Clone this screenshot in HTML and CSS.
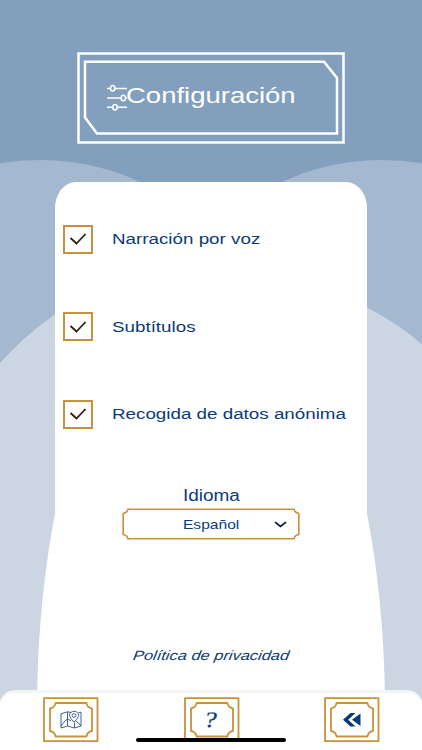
FILE: index.html
```html
<!DOCTYPE html>
<html lang="es">
<head>
    <meta charset="UTF-8">
    <meta name="viewport" content="width=device-width, initial-scale=1.0">
    <link rel="stylesheet" href="styles.css">
    <title>Configuración</title>
</head>
<body>

<!-- Fondo -->
<svg class="background" viewBox="0 0 422 750" preserveAspectRatio="none">
    <rect width="422" height="750" fill="#829fbe"/>
    <circle cx="40" cy="399" r="239" fill="#a4b8cf"/>
    <circle cx="382" cy="399" r="239" fill="#a4b8cf"/>
    <path d="M0 363 Q25 335 55 314.500 Q211 225 367 307.500 Q399 324 422 344.500 V750 H0 Z" fill="#ccd6e3"/>
    <ellipse cx="211" cy="710" rx="174" ry="443" fill="#fff"/>
</svg>

<div class="screen">
    <header class="title-box">
        <svg class="title-frame" viewBox="0 0 268 92" fill="none" stroke="#fff">
            <rect x="1.500" y="1.500" width="265" height="89" stroke-width="2.500"/>
            <path d="M8 9.700 H247 L260 26 V81.500 H20 L8 65.500 Z" stroke-width="2.500"/>
        </svg>
        <svg class="title-icon" viewBox="0 0 21 28" fill="none" stroke="#fff" stroke-width="1.500">
            <path d="M0 4.500 H3.500 M8 4.500 H20 M0 14 H14 M18.500 14 H20 M0 23.300 H5.500 M10.500 23.300 H20"/>
            <ellipse cx="5.700" cy="4.300" rx="2.200" ry="2.800"/>
            <ellipse cx="16.300" cy="14" rx="2.200" ry="2.800"/>
            <ellipse cx="8" cy="23.300" rx="2.200" ry="2.800"/>
        </svg>
        <h1>Configuración</h1>
    </header>

    <main class="card">
        <div class="option">
            <span class="checkbox"><svg viewBox="0 0 18 14"><path d="M1.500 6 L7.500 11.500 L16.500 2"/></svg></span>
            <span class="label">Narración por voz</span>
        </div>
        <div class="option">
            <span class="checkbox"><svg viewBox="0 0 18 14"><path d="M1.500 6 L7.500 11.500 L16.500 2"/></svg></span>
            <span class="label">Subtítulos</span>
        </div>
        <div class="option">
            <span class="checkbox"><svg viewBox="0 0 18 14"><path d="M1.500 6 L7.500 11.500 L16.500 2"/></svg></span>
            <span class="label">Recogida de datos anónima</span>
        </div>

        <div class="language">
            <span class="language-title">Idioma</span>
            <div class="select">
                <svg class="select-frame" viewBox="0 0 178 32" fill="none" stroke="#c8913b" stroke-width="1.600">
                    <path d="M6 1.200 H172 Q172.500 4.500 176.800 5.500 V26.500 Q172.500 27.500 172 30.800 H6 Q5.500 27.500 1.200 26.500 V5.500 Q5.500 4.500 6 1.200 Z"/>
                </svg>
                <span class="select-value">Español</span>
                <svg class="select-arrow" viewBox="0 0 13 7"><path d="M1 1.200 L6.500 5.500 L12 1.200"/></svg>
            </div>
        </div>

        <a class="privacy">Política de privacidad</a>
    </main>
</div>

<nav class="bottom-bar">
    <div class="nav-button">
        <svg viewBox="0 0 56 46" fill="none">
            <rect class="gold" x="1" y="1.200" width="53.500" height="43"/>
            <path class="gold" d="M12.500 6 H43.500 Q44 10.500 49 11.500 V34 Q44 35 43.500 39.500 H12.500 Q12 35 7 34 V11.500 Q12 10.500 12.500 6 Z"/>
            <g stroke="#2d5089" stroke-width="0.900">
                <path d="M28 15.500 L24.500 14.800 L18 16.800 V31 L24.500 29 L31.500 31 L38 29 V15.200 L35.500 15.800"/>
                <path d="M24.500 14.800 V29 M31.500 25.500 V31 M18 29 L22 24 L24.500 22 L28 24 M32.500 24 L35.500 26 L38 29"/>
                <path d="M31 25 Q26.500 20.500 26.500 18.300 A4.600 4 0 0 1 35.700 18.300 Q35.700 20.500 31 25 Z"/>
                <ellipse cx="31" cy="18.500" rx="2" ry="1.800"/>
            </g>
        </svg>
    </div>
    <div class="nav-button">
        <svg viewBox="0 0 56 46" fill="none">
            <rect class="gold" x="1" y="1.200" width="53.500" height="43"/>
            <path class="gold" d="M12.500 6 H43.500 Q44 10.500 49 11.500 V34 Q44 35 43.500 39.500 H12.500 Q12 35 7 34 V11.500 Q12 10.500 12.500 6 Z"/>
        </svg>
        <span class="help">?</span>
    </div>
    <div class="nav-button">
        <svg viewBox="0 0 56 46" fill="none">
            <rect class="gold" x="1" y="1.200" width="53.500" height="43"/>
            <path class="gold" d="M12.500 6 H43.500 Q44 10.500 49 11.500 V34 Q44 35 43.500 39.500 H12.500 Q12 35 7 34 V11.500 Q12 10.500 12.500 6 Z"/>
            <path d="M19 22.700 L26.500 16 H31.500 L24.200 22.700 L31.500 29.500 H26.500 Z M28 22.700 L36.500 16.500 V29 Z" fill="#063b7b"/>
        </svg>
    </div>
    <div class="home-indicator"></div>
</nav>

</body>
</html>
```
FILE: styles.css
```css
* {
    box-sizing: border-box;
}

body {
    width: 422px;
    height: 750px;
    margin: 0;
    overflow: hidden;
    position: relative;
    display: flex;
    flex-direction: column;
    font-family: "Liberation Sans", Arial, sans-serif;
    color: #0b3b78;
}

svg {
    display: block;
}

.background {
    position: absolute;
    top: 0;
    left: 0;
    width: 422px;
    height: 750px;
    z-index: -1;
}

.screen {
    height: 690px;
    padding-top: 52px;
    display: flex;
    flex-direction: column;
    align-items: center;
}

/* Cabecera */
.title-box {
    position: relative;
    width: 268px;
    height: 92px;
    padding: 0 0 1px 30px;
    display: flex;
    align-items: center;
    color: #fff;
}

.title-frame {
    position: absolute;
    top: 0;
    left: 0;
    width: 268px;
    height: 92px;
}

.title-icon {
    width: 21px;
    height: 28px;
}

.title-box h1 {
    margin: 0 0 3px -2px;
    font-size: 22.600px;
    line-height: 28px;
    font-weight: normal;
    transform: scaleX(1.217);
    transform-origin: left;
}

/* Panel de opciones */
.card {
    width: 312px;
    height: 508px;
    margin-top: 37.500px;
    padding: 43px 8px 0;
    display: flex;
    flex-direction: column;
    background: linear-gradient(#fff 335px, transparent 335px);
    border-radius: 21px 21px 0 0 / 26px 26px 0 0;
}

.option {
    height: 29px;
    margin-bottom: 58.600px;
    display: flex;
    align-items: center;
    gap: 19.400px;
}

.checkbox {
    width: 30px;
    height: 29px;
    border: 2px solid #c8913b;
    display: flex;
    align-items: center;
    justify-content: center;
}

.checkbox svg {
    width: 18px;
    height: 14px;
    fill: none;
    stroke: #2e210e;
    stroke-width: 1.800;
}

.label {
    font-size: 15.450px;
    white-space: nowrap;
    transform: scaleX(1.217);
    transform-origin: left;
}

.language {
    display: flex;
    flex-direction: column;
    align-items: center;
    gap: 3px;
}

.language-title {
    font-size: 15.600px;
    line-height: 18px;
    transform: scaleX(1.217);
}

.select {
    position: relative;
    width: 178px;
    height: 32px;
    display: flex;
    align-items: center;
    justify-content: center;
}

.select-frame {
    position: absolute;
    top: 0;
    left: 0;
    width: 178px;
    height: 32px;
}

.select-value {
    font-size: 12.800px;
    transform: scaleX(1.217);
}

.select-arrow {
    position: absolute;
    top: 13px;
    right: 13px;
    width: 13px;
    height: 7px;
    fill: none;
    stroke: #06152b;
    stroke-width: 1.700;
}

.privacy {
    margin-top: 108px;
    align-self: center;
    font-size: 13.500px;
    font-style: italic;
    line-height: 16px;
    transform: scaleX(1.217) skewX(-7deg);
}

/* Barra inferior */
.bottom-bar {
    position: relative;
    width: 422px;
    height: 60px;
    padding: 4px 42px 0 43px;
    display: flex;
    justify-content: space-between;
    background: #fff;
    border-top: 3px solid #f4f5f7;
    border-radius: 16px 16px 0 0 / 14px 14px 0 0;
}

.nav-button {
    position: relative;
    width: 56px;
    height: 46px;
}

.nav-button svg {
    width: 56px;
    height: 46px;
}

.gold {
    stroke: #c8913b;
    stroke-width: 1.800;
    stroke-linejoin: round;
}

.help {
    position: absolute;
    top: 11px;
    left: 0;
    width: 54px;
    text-align: center;
    font-family: "Liberation Serif", serif;
    font-size: 22px;
    line-height: 24px;
    -webkit-text-stroke: 0.200px #0b3b78;
    transform: scaleX(1.217) skewX(-9deg);
}

.home-indicator {
    position: absolute;
    left: 136px;
    bottom: 8px;
    width: 150px;
    height: 4px;
    border-radius: 2px;
    background: #000;
}
```
